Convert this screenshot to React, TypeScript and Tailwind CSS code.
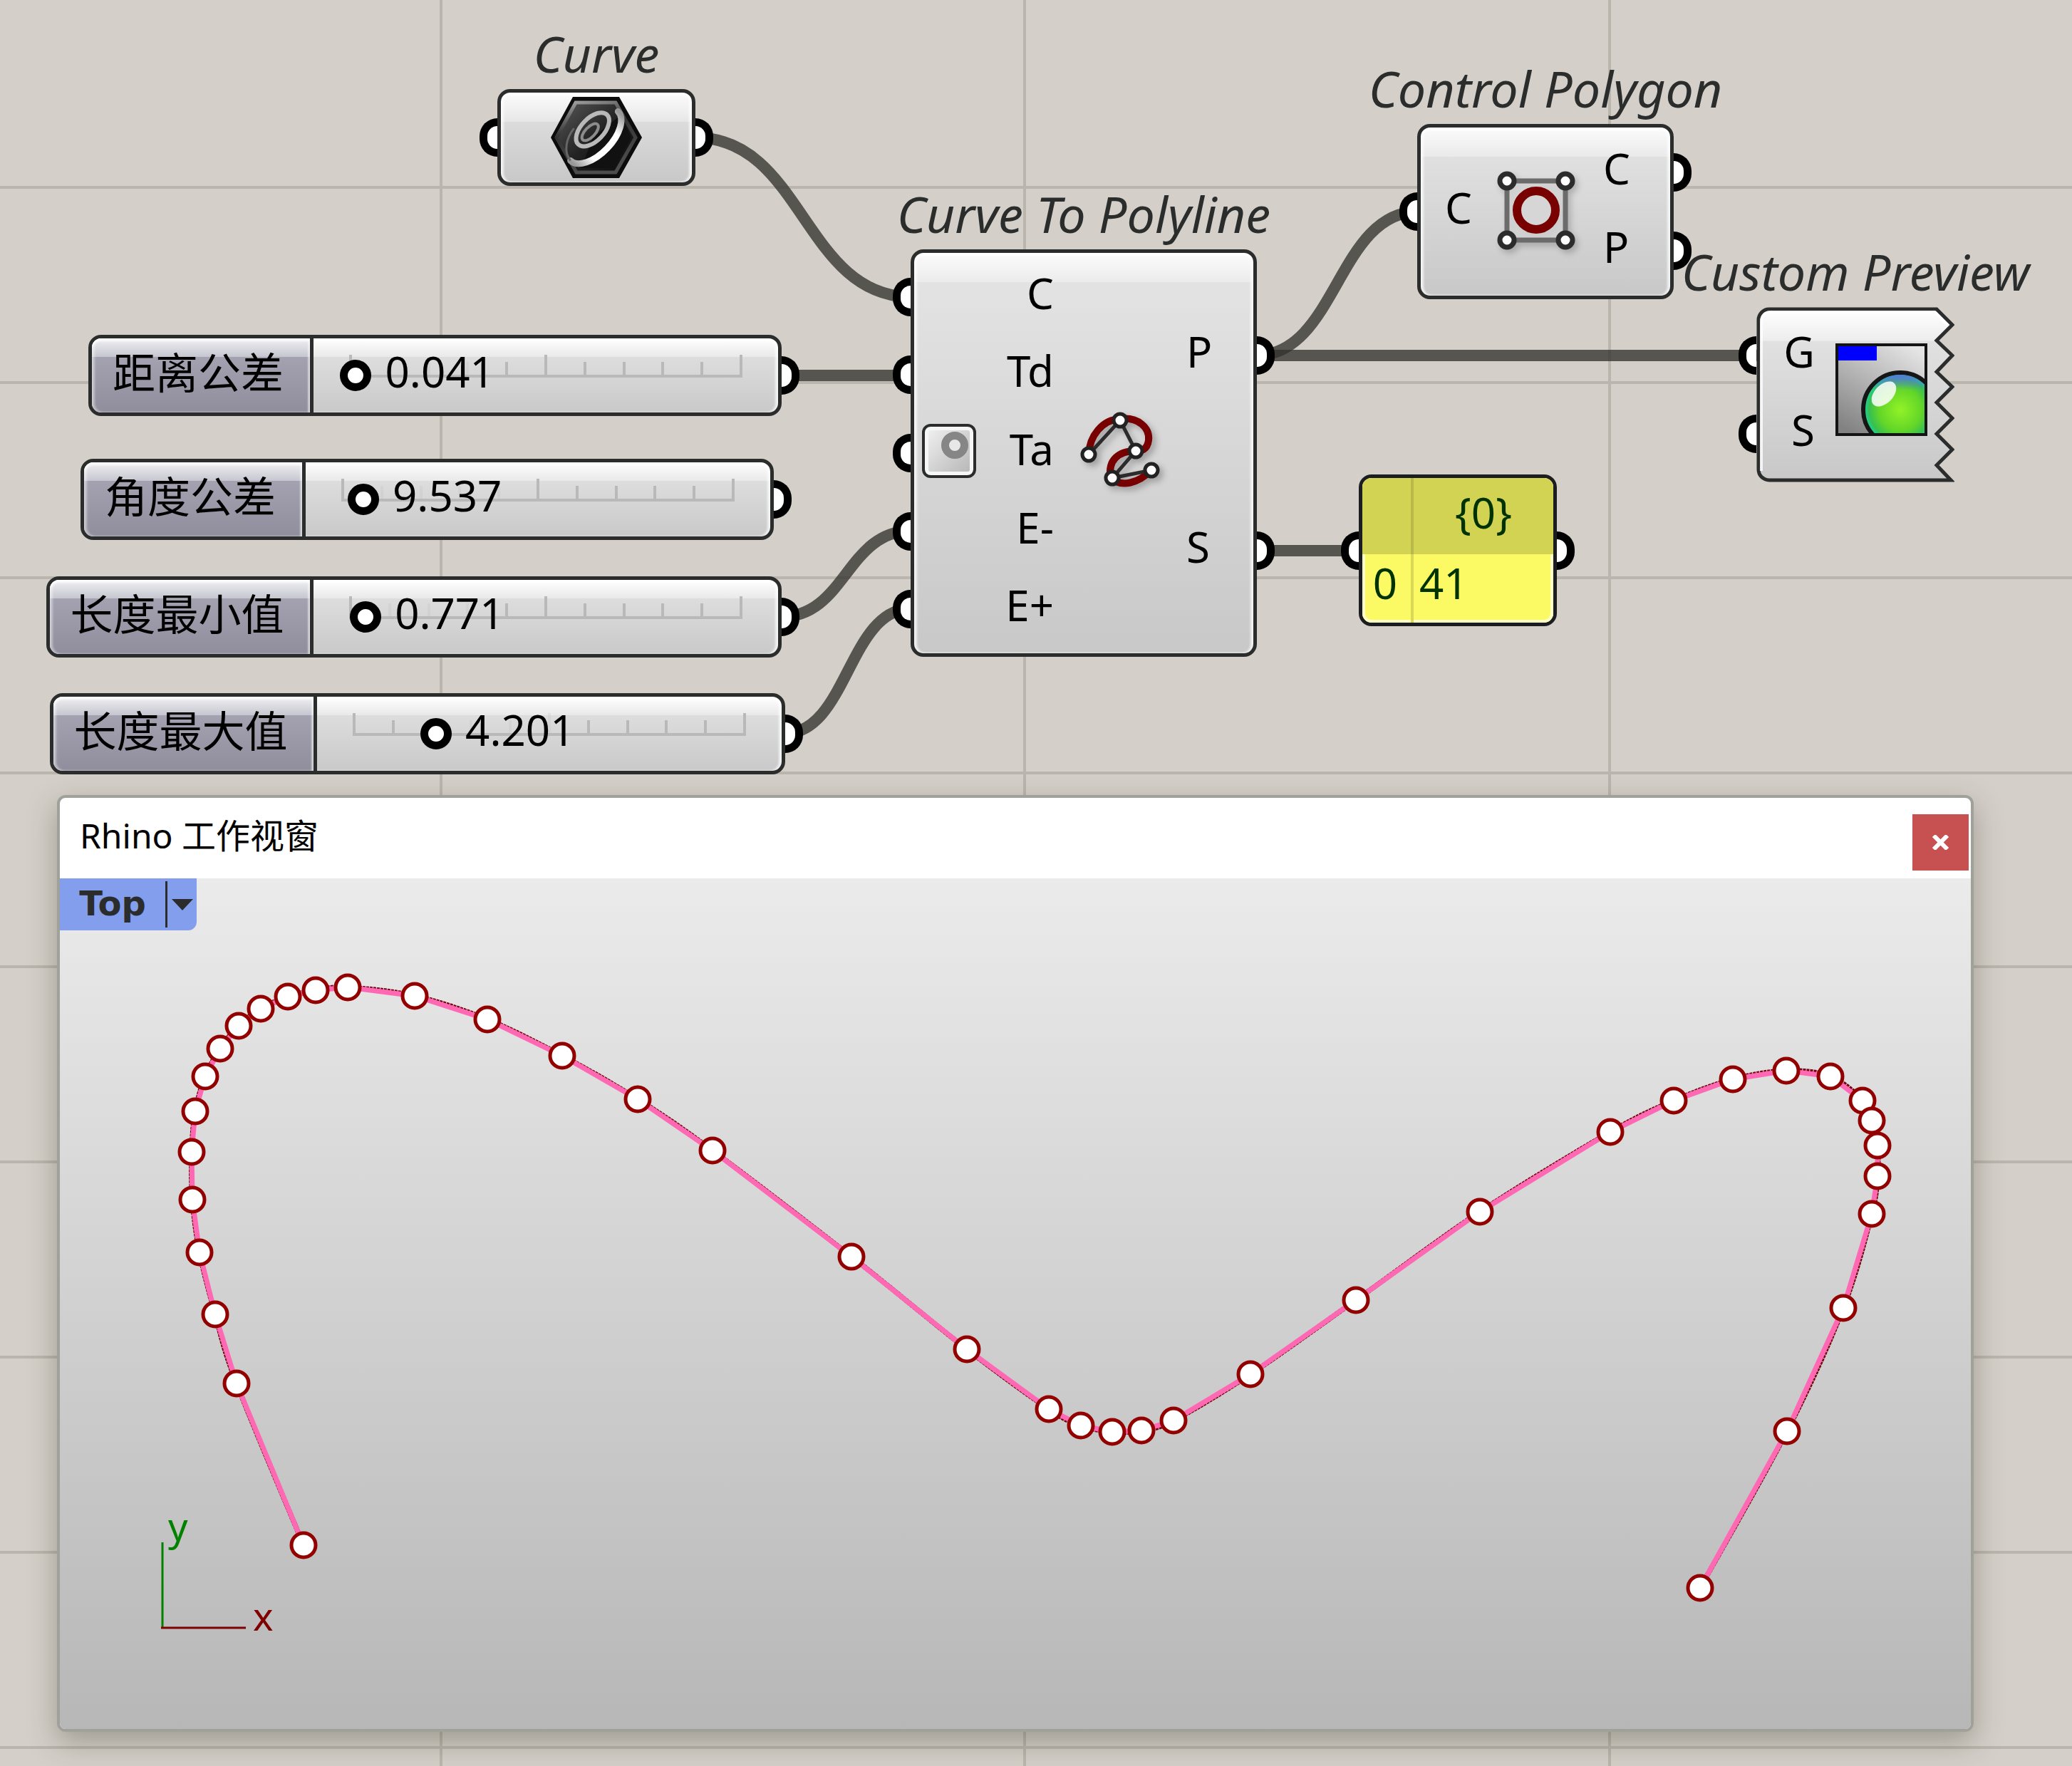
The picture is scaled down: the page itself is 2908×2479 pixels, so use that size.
import { useState } from "react";
import type { ReactNode } from "react";

type Point = [number, number];

const SLIDERS = [
  { id: "distance", label: "距离公差", initial: 0.041, max: 3, place: "left-[124px] top-[470px] w-[973px]", labelWidth: "w-[311px]" },
  { id: "angle", label: "角度公差", initial: 9.537, max: 180, place: "left-[113px] top-[644px] w-[973px]", labelWidth: "w-[311px]" },
  { id: "min-length", label: "长度最小值", initial: 0.771, max: 20, place: "left-[65px] top-[809px] w-[1032px]", labelWidth: "w-[370px]" },
  { id: "max-length", label: "长度最大值", initial: 4.201, max: 20, place: "left-[70px] top-[973px] w-[1032px]", labelWidth: "w-[370px]" },
];

const WIRES = [
  [975, 193, 1280, 417],
  [1095, 527, 1280, 527],
  [1095, 866, 1280, 745],
  [1100, 1030, 1280, 854],
  [1762, 499, 1991, 297],
  [1762, 499, 2466, 499],
  [1762, 773, 1908, 773],
];

const VERTICES: Point[] = [
  [426, 2169], [332, 1942], [302, 1845], [280, 1758], [270, 1684], [269, 1617],
  [274, 1560], [288, 1511], [309, 1472], [335, 1440], [366, 1416], [404, 1399],
  [443, 1390], [488, 1386], [582, 1398], [684, 1431], [789, 1482], [895, 1543],
  [1000, 1615], [1195, 1764], [1357, 1894], [1472, 1978], [1517, 2001], [1561, 2010],
  [1602, 2008], [1647, 1994], [1755, 1929], [1903, 1825], [2077, 1701], [2260, 1589],
  [2349, 1545], [2432, 1515], [2507, 1503], [2569, 1511], [2614, 1545], [2627, 1573],
  [2635, 1608], [2635, 1651], [2627, 1704], [2587, 1836], [2508, 2009], [2386, 2229],
];

function wirePath([x1, y1, x2, y2]: number[]) {
  const mid = (x1 + x2) / 2;
  return `M${x1} ${y1} C${mid} ${y1} ${mid} ${y2} ${x2} ${y2}`;
}

// Catmull-Rom through all the vertices
function smoothPath(points: Point[]) {
  let d = `M${points[0][0]} ${points[0][1]}`;
  for (let i = 0; i < points.length - 1; i++) {
    const p0 = points[i - 1] ?? points[i];
    const p1 = points[i];
    const p2 = points[i + 1];
    const p3 = points[i + 2] ?? p2;
    d += ` C${p1[0] + (p2[0] - p0[0]) / 6} ${p1[1] + (p2[1] - p0[1]) / 6} ${p2[0] - (p3[0] - p1[0]) / 6} ${p2[1] - (p3[1] - p1[1]) / 6} ${p2[0]} ${p2[1]}`;
  }
  return d;
}

function Port({ side }: { side: "left" | "right" }) {
  return side === "left" ? (
    <span className="absolute top-1/2 -left-[30px] -mt-[27px] h-[54px] w-[25px] rounded-l-full border-[11px] border-r-0 border-black bg-white" />
  ) : (
    <span className="absolute top-1/2 -right-[30px] -mt-[27px] h-[54px] w-[25px] rounded-r-full border-[11px] border-l-0 border-black bg-white" />
  );
}

function Title({ children }: { children: ReactNode }) {
  return (
    <h2 className="absolute inset-x-0 bottom-full mb-5 flex justify-center text-[70px] leading-none whitespace-nowrap text-[#2b2d2c] italic">
      {children}
    </h2>
  );
}

function Inputs({ names, width = "w-[75px]" }: { names: string[]; width?: string }) {
  return (
    <ul className={`flex flex-col ${width}`}>
      {names.map((name) => (
        <li key={name} className="relative flex flex-1 items-center justify-end pb-3">
          {name}
          <span className="absolute inset-0">
            <Port side="left" />
          </span>
        </li>
      ))}
    </ul>
  );
}

function Outputs({ names }: { names: string[] }) {
  return (
    <ul className="flex w-[94px] flex-col">
      {names.map((name) => (
        <li key={name} className="relative flex flex-1 items-center pb-3">
          {name}
          <span className="absolute inset-0">
            <Port side="right" />
          </span>
        </li>
      ))}
    </ul>
  );
}

const CAPSULE =
  "absolute flex rounded-[18px] border-[5px] border-[#2b2c2c] shadow-[inset_0_4px_3px_#fff,inset_4px_0_3px_rgba(255,255,255,0.7),inset_-4px_0_3px_rgba(255,255,255,0.7)] bg-[linear-gradient(to_bottom,rgba(255,255,255,0.85),rgba(255,255,255,0.3)_41px,transparent_41px),linear-gradient(to_bottom,#e5e5e5,#c8c8c8)]";

function CurveIcon() {
  return (
    <svg viewBox="0 0 130 116" className="h-[116px] w-[130px]">
      <defs>
        <linearGradient id="hex" x1="0" y1="0" x2="1" y2="1">
          <stop offset="0" stopColor="#5a5a5a" />
          <stop offset="0.5" stopColor="#222" />
          <stop offset="1" stopColor="#0a0a0a" />
        </linearGradient>
        <linearGradient id="hexEdge" x1="0" y1="0" x2="0.3" y2="1">
          <stop offset="0" stopColor="#aaa" />
          <stop offset="0.45" stopColor="#333" />
          <stop offset="1" stopColor="#4c4c4c" />
        </linearGradient>
        <linearGradient id="rim" x1="0" y1="0" x2="1" y2="0">
          <stop offset="0" stopColor="#999" />
          <stop offset="0.25" stopColor="#fff" />
          <stop offset="0.75" stopColor="#fff" />
          <stop offset="1" stopColor="#999" />
        </linearGradient>
      </defs>
      <path d="M32 1 H97 L129 58 L97 115 H32 L1 58 Z" fill="#0c0c0c" />
      <path d="M36 9 H92 L120 58 L92 107 H37 L9 58 Z" fill="url(#hex)" stroke="url(#hexEdge)" strokeWidth="5" />
      <path d="M60 58 L100 26 L114 58 L89 101 H44 Z" fill="#111" />
      <g transform="rotate(-46 62 56)" fill="none">
        <path d="M14 56 A48 25 0 0 0 110 56" stroke="url(#rim)" strokeWidth="9" strokeLinecap="round" />
        <path d="M14 56 C16 40 32 30 50 28" stroke="#666" strokeWidth="3" />
        <ellipse cx="67" cy="48" rx="29" ry="16" stroke="#b9b9b9" strokeWidth="6" />
        <ellipse cx="62" cy="48" rx="15" ry="7" stroke="#8c8c8c" strokeWidth="4" />
      </g>
    </svg>
  );
}

function PolylineIcon() {
  const dots: Point[] = [[18, 62], [62, 14], [84, 57], [51, 95], [106, 84]];
  return (
    <svg viewBox="0 0 120 120" className="h-[120px] w-[120px] drop-shadow-[5px_5px_4px_rgba(0,0,0,0.25)]">
      <path
        d="M18 62 C19 36 37 13 62 12 C88 9 104 25 102 42 C100 56 92 57 84 57 C60 57 44 70 49 95 C64 109 88 102 106 84"
        fill="none"
        stroke="#780000"
        strokeWidth="10"
      />
      <path d="M18 62 L62 14 L84 57 L51 95 L106 84" fill="none" stroke="#2c2c2c" strokeWidth="5" />
      {dots.map(([x, y]) => (
        <circle key={x} cx={x} cy={y} r="9" fill="#fff" stroke="#222" strokeWidth="5" />
      ))}
    </svg>
  );
}

function PolygonIcon() {
  const corners: Point[] = [[19, 19], [101, 19], [19, 102], [101, 102]];
  return (
    <svg viewBox="0 0 120 120" className="h-[120px] w-[120px] drop-shadow-[4px_5px_4px_rgba(0,0,0,0.2)]">
      <rect x="19" y="19" width="82" height="83" fill="#e2e2e2" fillOpacity="0.6" stroke="#6b6b6b" strokeWidth="7" />
      <circle cx="60" cy="60" r="27" fill="#d6d6d6" stroke="#780000" strokeWidth="12" />
      {corners.map(([x, y]) => (
        <circle key={`${x}-${y}`} cx={x} cy={y} r="10" fill="#fff" stroke="#2c2c2c" strokeWidth="7" />
      ))}
    </svg>
  );
}

function PreviewIcon() {
  return (
    <svg viewBox="0 0 129 130" className="h-[130px] w-[129px]">
      <defs>
        <linearGradient id="previewBack" x1="0.8" y1="0" x2="0.2" y2="1">
          <stop offset="0" stopColor="#e4e4e4" />
          <stop offset="1" stopColor="#828282" />
        </linearGradient>
        <radialGradient id="sphere" cx="0.5" cy="0.5" r="0.52">
          <stop offset="0" stopColor="#93f227" />
          <stop offset="0.55" stopColor="#63d628" />
          <stop offset="0.8" stopColor="#38bf50" />
          <stop offset="1" stopColor="#08e0c0" />
        </radialGradient>
        <linearGradient id="sky" x1="0" y1="0" x2="0" y2="1">
          <stop offset="0" stopColor="#5577e0" />
          <stop offset="0.22" stopColor="#5577e0" stopOpacity="0" />
        </linearGradient>
        <clipPath id="previewClip">
          <rect x="2" y="2" width="125" height="126" />
        </clipPath>
      </defs>
      <rect x="2" y="2" width="125" height="126" fill="url(#previewBack)" />
      <g clipPath="url(#previewClip)">
        <circle cx="91" cy="93" r="52" fill="url(#sphere)" stroke="#161616" strokeWidth="6" />
        <circle cx="91" cy="93" r="49" fill="url(#sky)" />
        <ellipse cx="68" cy="71" rx="21" ry="13" fill="#fff" fillOpacity="0.85" transform="rotate(-46 68 71)" />
      </g>
      <rect x="2" y="3" width="56" height="21" fill="#0000ff" />
      <rect x="2" y="2" width="125" height="126" fill="none" stroke="#141414" strokeWidth="4" />
    </svg>
  );
}

function NumberSlider({ id, label, initial, max, place, labelWidth }: (typeof SLIDERS)[number]) {
  const [value, setValue] = useState(initial);
  const ratio = value / max;

  return (
    <div className={`absolute flex h-[114px] rounded-[18px] border-[5px] border-[#2b2c2c] bg-[linear-gradient(to_bottom,#fff,#e9e9e9_26px,#dddddd_26px,#c9c9c9)] shadow-[inset_0_4px_3px_#fff,inset_-4px_0_3px_rgba(255,255,255,0.7)] ${place}`}>
      <label
        htmlFor={id}
        className={`flex items-center justify-center rounded-l-[13px] border-r-[5px] border-[#2b2c2c] bg-[linear-gradient(to_bottom,#f0f0f3,#c6c6d0_26px,#a4a2b1_26px,#908e9c)] pr-2 pb-2 shadow-[inset_0_4px_3px_rgba(255,255,255,0.8),inset_4px_0_3px_rgba(255,255,255,0.4),inset_-3px_0_2px_rgba(255,255,255,0.5)] ${labelWidth}`}
      >
        {label}
      </label>
      <div className="relative flex-1">
        <div className="absolute inset-x-[50px] bottom-[49px] flex items-end justify-between border-b-4 border-[#b9b9b9]">
          {Array.from({ length: 11 }, (_, i) => {
            const covered = i > ratio * 10 && i < ratio * 10 + 3.5;
            return (
              <span
                key={i}
                className={`w-1 bg-[#b9b9b9] ${i % 5 === 0 ? "h-7" : "h-[18px]"} ${covered ? "opacity-20" : ""}`}
              />
            );
          })}
        </div>
        <div className="absolute inset-x-[30px] inset-y-0">
          <input
            id={id}
            type="range"
            min={0}
            max={max}
            step={0.001}
            value={value}
            onChange={(e) => setValue(Number(e.target.value))}
            className="block h-full w-full appearance-none bg-transparent [&::-webkit-slider-thumb]:h-11 [&::-webkit-slider-thumb]:w-11 [&::-webkit-slider-thumb]:appearance-none [&::-webkit-slider-thumb]:rounded-full [&::-webkit-slider-thumb]:border-[11px] [&::-webkit-slider-thumb]:border-solid [&::-webkit-slider-thumb]:border-black [&::-webkit-slider-thumb]:bg-white"
          />
          <output
            htmlFor={id}
            className="pointer-events-none absolute inset-y-0 flex items-center pb-3"
            style={{ left: `calc(${ratio} * (100% - 44px) + 63px)` }}
          >
            {value.toFixed(3)}
          </output>
        </div>
        <span className="absolute inset-y-0 right-0">
          <Port side="right" />
        </span>
      </div>
    </div>
  );
}

function Viewport() {
  const polyline = VERTICES.map((p) => p.join(",")).join(" ");
  return (
    <svg viewBox="84 1233 2682 1194" className="block w-full rounded-b-lg bg-linear-to-b from-[#ebebeb] to-[#b7b7b7]">
      <path d={smoothPath(VERTICES)} fill="none" stroke="#7a0010" strokeWidth="7" strokeDasharray="4 1" />
      <polyline points={polyline} fill="none" stroke="#ff69b4" strokeWidth="7" />
      {VERTICES.map(([x, y]) => (
        <circle key={`${x}-${y}`} cx={x} cy={y} r="17" fill="#fff" stroke="#930000" strokeWidth="5" />
      ))}
      <path d="M228 2165 V2286" stroke="#008200" strokeWidth="3" />
      <path d="M226 2285 H345" stroke="#800000" strokeWidth="3" />
      <text x="236" y="2163" fill="#008200" fontSize="54">y</text>
      <text x="355" y="2289" fill="#800000" fontSize="54">x</text>
    </svg>
  );
}

export default function App() {
  return (
    <main
      lang="zh-CN"
      className="relative min-h-screen overflow-hidden bg-[#d4cfc8] pb-12 font-['Noto_Sans','Noto_Sans_CJK_SC',sans-serif] text-[60px] leading-none text-black"
    >
      {/* canvas grid and wires */}
      <svg className="absolute inset-0 h-full w-full">
        {[619, 1438, 2259].map((x) => (
          <line key={x} x1={x} x2={x} y1="0" y2="100%" stroke="#bab6ad" strokeWidth="4" />
        ))}
        {[263, 537, 811, 1085, 1357, 1631, 1905, 2179, 2453].map((y) => (
          <line key={y} x1="0" x2="100%" y1={y} y2={y} stroke="#bab6ad" strokeWidth="4" />
        ))}
        <g fill="none" stroke="#32322d" strokeOpacity="0.78" strokeWidth="16">
          {WIRES.map((wire) => (
            <path key={wire.join()} d={wirePath(wire)} />
          ))}
        </g>
      </svg>

      <section className="relative h-[1116px]">
        <div className={`${CAPSULE} top-[125px] left-[698px] h-[136px] w-[278px] items-center justify-center`}>
          <Title>Curve</Title>
          <Port side="left" />
          <CurveIcon />
          <Port side="right" />
        </div>

        {SLIDERS.map((slider) => (
          <NumberSlider key={slider.id} {...slider} />
        ))}

        <div className={`${CAPSULE} top-[350px] left-[1278px] h-[572px] w-[486px] justify-between py-[7px]`}>
          <Title>Curve To Polyline</Title>
          <Inputs names={["C", "Td", "Ta", "E-", "E+"]} width="w-[196px]" />
          <button
            aria-label="Angle units"
            className="absolute top-[240px] left-[11px] h-[76px] w-[76px] rounded-xl border-4 border-[#2b2c2c] bg-linear-to-br from-[#f4f4f4] to-[#b4b4b4] shadow-[inset_0_0_0_5px_#f6f6f6]"
          >
            <span className="absolute top-[7px] right-[7px] h-[38px] w-[38px] rounded-full border-[11px] border-[#868686] bg-[#e8e8e8]" />
          </button>
          <span className="flex items-center pr-1">
            <PolylineIcon />
          </span>
          <Outputs names={["P", "S"]} />
        </div>

        {/* jagged right edge marks a node with no outputs */}
        <div className="absolute top-[431px] left-[2465px] h-[246px] w-[278px] border-[5px] border-transparent py-2">
          <Title>Custom Preview</Title>
          <svg viewBox="0 0 278 246" className="absolute -top-[5px] -left-[5px] h-[246px] w-[278px]">
            <defs>
              <linearGradient id="capsule" x1="0" y1="0" x2="0" y2="1">
                <stop offset="0" stopColor="#fff" />
                <stop offset="0.185" stopColor="#ededed" />
                <stop offset="0.186" stopColor="#e1e1e1" />
                <stop offset="1" stopColor="#c8c8c8" />
              </linearGradient>
            </defs>
            <path
              d="M253 3 L275 25 L253 47 L275 68 L253 91 L275 112 L253 134 L275 156 L253 178 L275 200 L253 222 L273 243 H18 A15 15 0 0 1 3 228 V18 A15 15 0 0 1 18 3 Z"
              fill="url(#capsule)"
              stroke="#2b2c2c"
              strokeWidth="5"
            />
            <path d="M7 230 V20 A13 13 0 0 1 20 7 H250 L268 25" fill="none" stroke="#fff" strokeOpacity="0.8" strokeWidth="4" />
          </svg>
          <div className="relative flex h-full">
            <Inputs names={["G", "S"]} width="w-[77px]" />
          </div>
          <span className="absolute top-[46px] left-[106px]">
            <PreviewIcon />
          </span>
        </div>

        <div className={`${CAPSULE} top-[174px] left-[1989px] h-[246px] w-[360px] justify-between py-2`}>
          <Title>Control Polygon</Title>
          <Inputs names={["C"]} width="w-[72px]" />
          <span className="flex items-center pr-1 pb-1">
            <PolygonIcon />
          </span>
          <Outputs names={["C", "P"]} />
        </div>

        <div className="absolute top-[666px] left-[1907px] h-[213px] w-[278px] rounded-[18px] border-[5px] border-[#1c1d20] bg-[#fcfa64]">
          <table className="h-full w-full overflow-hidden rounded-[13px] text-[#003300] shadow-[inset_0_0_0_4px_#ffffc8]">
            <thead>
              <tr className="h-[107px]">
                <td className="w-[70px] border-r-4 border-[#b9b94a] bg-[#d3d353]" />
                <th scope="col" className="bg-[#d3d353] px-4 pb-3 text-center font-normal">{"{0}"}</th>
              </tr>
            </thead>
            <tbody>
              <tr>
                <th scope="row" className="border-r-4 border-[#dad957] pt-1 pr-1 pb-5 text-center font-normal">0</th>
                <td className="pt-1 pb-5 pl-2">41</td>
              </tr>
            </tbody>
          </table>
          <Port side="left" />
          <Port side="right" />
        </div>
      </section>

      <section className="relative mr-[138px] ml-20 rounded-xl border-4 border-[#a1a19b] bg-white shadow-[0_14px_40px_rgba(60,55,40,0.35)]">
        <header className="flex h-[113px] items-center justify-between pr-[3px] pl-7">
          <h1 className="pb-2 text-[48px]">Rhino 工作视窗</h1>
          <button aria-label="Close" className="mt-3 flex h-[79px] w-[79px] items-center justify-center bg-[#c75050]">
            <svg viewBox="0 0 25 21" className="h-[21px] w-[25px]">
              <path d="M3 1 L22 20 M22 1 L3 20" stroke="#fff" strokeWidth="6" />
            </svg>
          </button>
        </header>
        <div className="relative">
          <Viewport />
          <div className="absolute top-0 left-0 flex h-[73px] w-[192px] items-center rounded-br-xl bg-[#849eee] text-[#2b2d2c]">
            <button className="flex-1 pb-1 font-['DejaVu_Sans',sans-serif] text-[48px] leading-none font-bold">Top</button>
            <button aria-label="Viewport menu" className="flex h-[65px] w-[44px] items-center justify-center border-l-[3px] border-[#2b2d2c]">
              <svg viewBox="0 0 30 16" className="h-4 w-[30px]">
                <path d="M0 0 H30 L15 16 Z" fill="currentColor" />
              </svg>
            </button>
          </div>
        </div>
      </section>
    </main>
  );
}
